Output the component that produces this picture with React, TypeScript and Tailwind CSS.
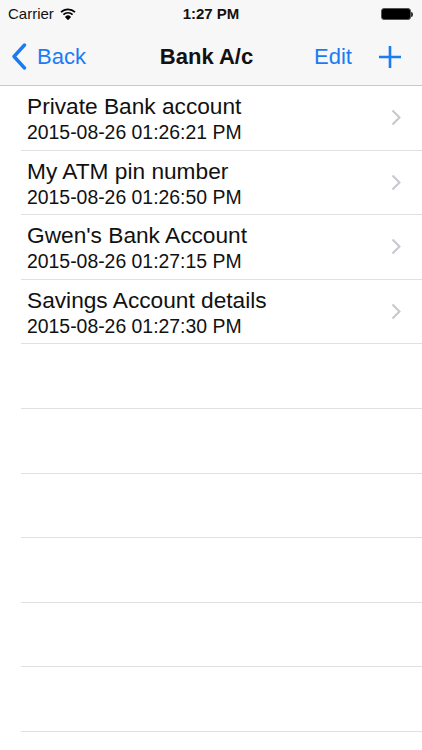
const rows = [
  { title: "Private Bank account", date: "2015-08-26 01:26:21 PM" },
  { title: "My ATM pin number", date: "2015-08-26 01:26:50 PM" },
  { title: "Gwen's Bank Account", date: "2015-08-26 01:27:15 PM" },
  { title: "Savings Account details", date: "2015-08-26 01:27:30 PM" },
];

function Wifi() {
  return (
    <svg width="16" height="12" viewBox="0 0 16 12">
      <path d="M1 4.2 A10 10 0 0 1 15 4.2" fill="none" stroke="#000" strokeWidth="1.7" />
      <path d="M3.4 6.6 A6.6 6.6 0 0 1 12.6 6.6" fill="none" stroke="#000" strokeWidth="1.7" />
      <path d="M5.8 9 A3.2 3.2 0 0 1 10.2 9 L8 11.3 Z" fill="#000" stroke="#000" strokeWidth="1.2" strokeLinejoin="round" />
    </svg>
  );
}

function Battery() {
  return (
    <div className="flex items-center">
      <div className="h-[12px] w-[30px] rounded-[3px] border border-[#555] bg-black p-[1px]" />
      <div className="h-[5px] w-[2px] rounded-r-sm bg-[#333]" />
    </div>
  );
}

export default function App() {
  return (
    <div className="h-[750px] w-[422px] overflow-hidden bg-white font-['Liberation_Sans',Arial,sans-serif] text-[#111]">
      <div className="border-b border-[#c8c7cc] bg-[#f7f7f7]">
        <div className="flex h-[28px] items-center justify-between px-[8px]">
          <div className="flex w-[120px] items-center gap-[6px] text-[15px]">
            Carrier <Wifi />
          </div>
          <div className="text-[15px] font-bold">1:27 PM</div>
          <div className="flex w-[120px] justify-end pr-[1px]">
            <Battery />
          </div>
        </div>
        <div className="flex h-[57px] items-center justify-between pl-[11px] pr-[20px]">
          <div className="flex w-[130px] items-center gap-[10px] text-[#1a7cf4]">
            <svg width="16" height="27" viewBox="0 0 16 27">
              <path d="M13.5 2 L3 13.5 L13.5 25" fill="none" stroke="#1a7cf4" strokeWidth="3.4" strokeLinecap="round" strokeLinejoin="round" />
            </svg>
            <span className="text-[22px]">Back</span>
          </div>
          <div className="text-[22px] font-bold">Bank A/c</div>
          <div className="flex w-[130px] items-center justify-end gap-[26px] text-[#1a7cf4]">
            <span className="text-[22px]">Edit</span>
            <svg width="24" height="24" viewBox="0 0 24 24">
              <path d="M12 1 V23 M1 12 H23" stroke="#1a7cf4" strokeWidth="2.6" />
            </svg>
          </div>
        </div>
      </div>
      <div className="pl-[21px]">
        {rows.map((r) => (
          <div key={r.title} className="flex h-[64.6px] items-center border-b border-[#e0e0e4] pl-[6px] pr-[21px]">
            <div className="flex-1 pt-[2px]">
              <div className="text-[22.7px] leading-[28px]">{r.title}</div>
              <div className="text-[19.4px] leading-[25px]">{r.date}</div>
            </div>
            <svg width="10" height="17" viewBox="0 0 10 17">
              <path d="M1.5 1.5 L8.5 8.5 L1.5 15.5" fill="none" stroke="#c7c7cc" strokeWidth="2" />
            </svg>
          </div>
        ))}
        {Array.from({ length: 6 }).map((_, i) => (
          <div key={i} className="h-[64.6px] border-b border-[#e0e0e4]" />
        ))}
      </div>
    </div>
  );
}
